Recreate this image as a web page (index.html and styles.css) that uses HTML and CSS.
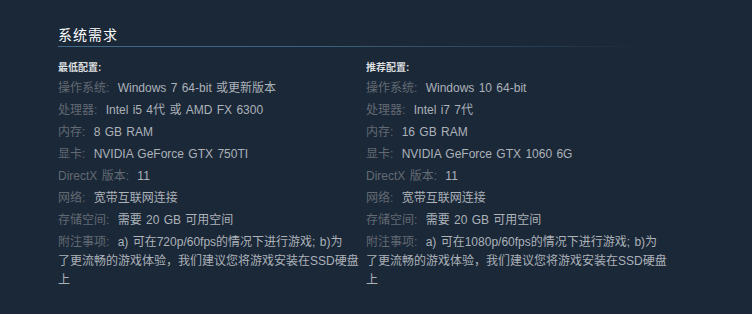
FILE: index.html
```html
<!DOCTYPE html>
<html lang="zh-CN">
<head>
<meta charset="utf-8">
<link rel="stylesheet" href="styles.css">
</head>
<body>
<div class="sysreq">
  <h2 class="title">系统需求</h2>
  <div class="cols">
    <div class="col">
      <div class="colhead">最低配置:</div>
      <ul class="list">
        <li><span class="lab">操作系统:</span> Windows 7 64-bit 或更新版本</li>
        <li><span class="lab">处理器:</span> Intel i5 4代 或 AMD FX 6300</li>
        <li><span class="lab">内存:</span> 8 GB RAM</li>
        <li><span class="lab">显卡:</span> NVIDIA GeForce GTX 750TI</li>
        <li><span class="lab">DirectX 版本:</span> 11</li>
        <li><span class="lab">网络:</span> 宽带互联网连接</li>
        <li><span class="lab">存储空间:</span> 需要 20 GB 可用空间</li>
        <li><span class="lab">附注事项:</span> a) 可在720p/60fps的情况下进行游戏; b)为<span class="keep">了更</span>流畅的游戏体验，我们建议您将游戏安装在SSD硬盘上</li>
      </ul>
    </div>
    <div class="col">
      <div class="colhead">推荐配置:</div>
      <ul class="list">
        <li><span class="lab">操作系统:</span> Windows 10 64-bit</li>
        <li><span class="lab">处理器:</span> Intel i7 7代</li>
        <li><span class="lab">内存:</span> 16 GB RAM</li>
        <li><span class="lab">显卡:</span> NVIDIA GeForce GTX 1060 6G</li>
        <li><span class="lab">DirectX 版本:</span> 11</li>
        <li><span class="lab">网络:</span> 宽带互联网连接</li>
        <li><span class="lab">存储空间:</span> 需要 20 GB 可用空间</li>
        <li><span class="lab">附注事项:</span> a) 可在1080p/60fps的情况下进行游戏; b)为<span class="keep">了更</span>流畅的游戏体验，我们建议您将游戏安装在SSD硬盘上</li>
      </ul>
    </div>
  </div>
</div>
</body>
</html>
```
FILE: styles.css
```css
html, body {
  margin: 0;
  padding: 0;
  background: #1b2838;
}
body {
  font-family: Arial, "Liberation Sans", "Noto Sans CJK SC", sans-serif;
  color: #acb2b8;
}
.sysreq {
  width: 616px;
  padding: 26px 0 0 58px;
}
.title {
  width: 587px;
  margin: 0;
  font-size: 14px;
  font-weight: normal;
  line-height: 18px;
  letter-spacing: 1px;
  color: #ffffff;
  padding-bottom: 3px;
  border-bottom: 1px solid transparent;
  background-image: linear-gradient(to right, #416b8a 0%, #3b6180 45%, rgba(45, 72, 98, 0.7) 80%, rgba(27, 40, 56, 0) 100%);
  background-size: 100% 1px;
  background-repeat: no-repeat;
  background-position: left bottom;
}
.cols {
  display: flex;
  gap: 7px;
  margin-top: 14px;
}
.col {
  flex: 0 0 301px;
}
.colhead {
  font-size: 10px;
  font-weight: bold;
  line-height: 12px;
  color: #dcdedf;
  margin-bottom: 5px;
}
.list {
  list-style: none;
  margin: 0;
  padding: 0;
}
.list li {
  font-size: 12px;
  line-height: 19px;
  margin-bottom: 3px;
  word-spacing: 1px;
  color: #acb2b8;
}
.lab {
  color: #626a73;
  margin-right: 4px;
}
.keep {
  white-space: nowrap;
}
```
